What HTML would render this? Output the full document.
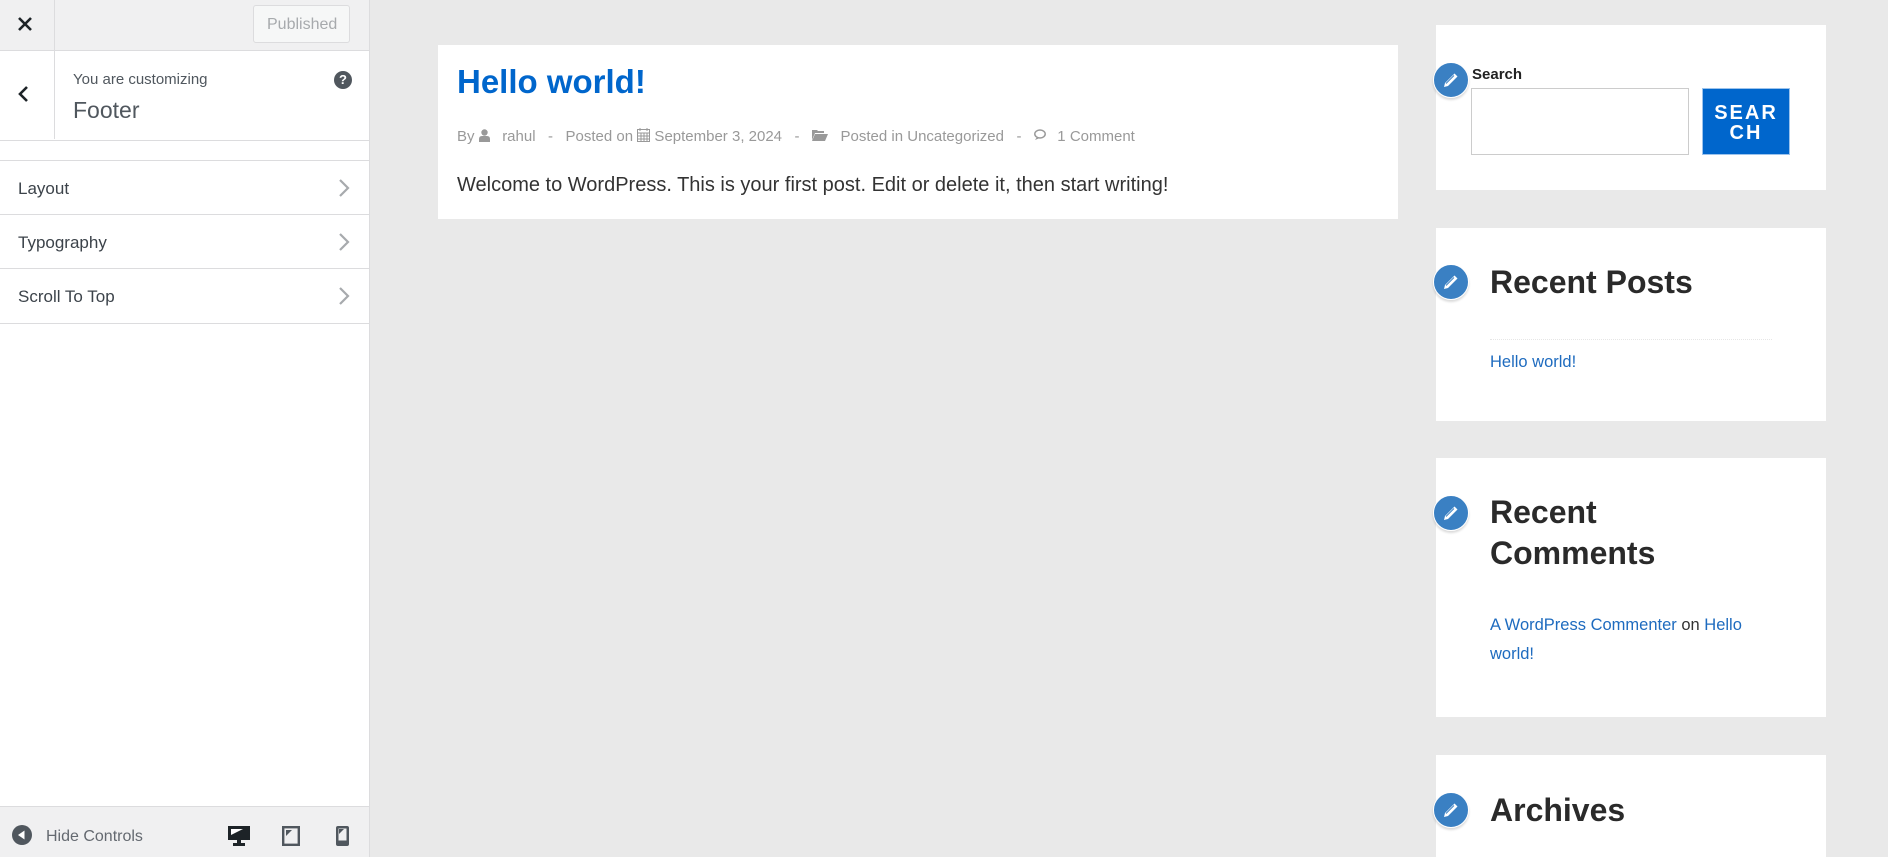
<!DOCTYPE html>
<html><head><meta charset="utf-8"><style>
*{margin:0;padding:0;box-sizing:border-box}
body{width:1888px;height:857px;overflow:hidden;background:#e9e9e9;font-family:"Liberation Sans",Arial,sans-serif;position:relative}
.a{position:absolute}
#side{left:0;top:0;width:370px;height:857px;background:#fff;border-right:1px solid #dcdcde}
.t{position:absolute;white-space:nowrap;line-height:1}
.card{position:absolute;background:#fff}
.pen{position:absolute;width:36px;height:36px;border-radius:50%;background:#3a80c3;box-shadow:0 2px 2px rgba(0,0,0,.15);border:1px solid #fff}
.pen svg{position:absolute;left:0;top:0}
.h{font-weight:bold;color:#2a2a2a;font-size:32px}
.lnk{color:#1e6bbf}
</style></head><body>
<div id="side" class="a">
  <div class="a" style="left:0;top:0;width:369px;height:51px;background:#f0f0f1;border-bottom:1px solid #dcdcde"></div>
  <div class="a" style="left:54px;top:0;width:1px;height:51px;background:#dcdcde"></div>
  <svg class="a" style="left:17px;top:16px" width="16" height="16" viewBox="0 0 16 16"><path d="M2 2L14 14M14 2L2 14" stroke="#1d2327" stroke-width="2.6"/></svg>
  <div class="a" style="left:253px;top:5px;width:97px;height:38px;border:1px solid #dcdcde;border-radius:3px;background:#f6f7f7"></div>
  <div class="t" style="left:267px;top:17px;font-size:16px;color:#a7aaad">Published</div>
  <div class="a" style="left:54px;top:51px;width:1px;height:88px;background:#dcdcde"></div>
  <svg class="a" style="left:17px;top:85px" width="12" height="18" viewBox="0 0 12 18"><path d="M10 2L3 9L10 16" stroke="#1d2327" stroke-width="2.6" fill="none"/></svg>
  <div class="t" style="left:73px;top:72px;font-size:15px;color:#50575e">You are customizing</div>
  <div class="t" style="left:73px;top:99px;font-size:23px;color:#50575e">Footer</div>
  <div class="a" style="left:334px;top:71px;width:18px;height:18px;border-radius:50%;background:#50575e;color:#fff;font-weight:bold;font-size:13px;text-align:center;line-height:18px">?</div>
  <div class="a" style="left:0;top:140px;width:369px;height:1px;background:#dcdcde"></div>
  <div class="a" style="left:0;top:160px;width:369px;height:1px;background:#dcdcde"></div>
  <div class="a" style="left:0;top:214px;width:369px;height:1px;background:#dcdcde"></div>
  <div class="a" style="left:0;top:268px;width:369px;height:1px;background:#dcdcde"></div>
  <div class="a" style="left:0;top:323px;width:369px;height:1px;background:#dcdcde"></div>
  <div class="t" style="left:18px;top:180px;font-size:17px;color:#3c434a">Layout</div>
  <div class="t" style="left:18px;top:234px;font-size:17px;color:#3c434a">Typography</div>
  <div class="t" style="left:18px;top:288px;font-size:17px;color:#3c434a">Scroll To Top</div>
  <svg class="a" style="left:338px;top:178px" width="12" height="20" viewBox="0 0 12 20"><path d="M2 2L10 10L2 18" stroke="#a7aaad" stroke-width="2.2" fill="none"/></svg>
  <svg class="a" style="left:338px;top:232px" width="12" height="20" viewBox="0 0 12 20"><path d="M2 2L10 10L2 18" stroke="#a7aaad" stroke-width="2.2" fill="none"/></svg>
  <svg class="a" style="left:338px;top:286px" width="12" height="20" viewBox="0 0 12 20"><path d="M2 2L10 10L2 18" stroke="#a7aaad" stroke-width="2.2" fill="none"/></svg>
  <div class="a" style="left:0;top:806px;width:369px;height:51px;background:#f0f0f1;border-top:1px solid #dcdcde"></div>
  <svg class="a" style="left:12px;top:825px" width="20" height="20" viewBox="0 0 20 20"><circle cx="10" cy="10" r="10" fill="#50575e"/><path d="M12.5 5.5V14.5L6 10Z" fill="#fff"/></svg>
  <div class="t" style="left:46px;top:829px;font-size:16px;color:#646970">Hide Controls</div>
  <svg class="a" style="left:228px;top:826px" width="22" height="20" viewBox="0 0 22 20"><rect x="0" y="0" width="22" height="14" fill="#1d2327"/><path d="M3 3H15L3 9Z" fill="#fff"/><rect x="9" y="14" width="4" height="3" fill="#1d2327"/><rect x="5" y="17" width="12" height="3" fill="#1d2327"/></svg>
  <svg class="a" style="left:282px;top:826px" width="18" height="20" viewBox="0 0 18 20"><rect x="1.2" y="1.2" width="15.6" height="17.6" fill="none" stroke="#50575e" stroke-width="2.4"/><path d="M4 4H10L4 10Z" fill="#50575e"/></svg>
  <svg class="a" style="left:336px;top:826px" width="13" height="20" viewBox="0 0 13 20"><rect x="0" y="0" width="13" height="20" rx="2" fill="#50575e"/><rect x="2.5" y="2.5" width="8" height="12" fill="#f0f0f1"/><path d="M3 3H8L3 8Z" fill="#50575e"/></svg>
</div>

<div class="card" style="left:438px;top:45px;width:960px;height:174px"></div>
<div class="t" style="left:457px;top:65px;font-size:33px;font-weight:bold;color:#0066cc">Hello world!</div>
<div class="t" style="left:457px;top:128px;font-size:15px;color:#999">By <svg width="11" height="13" viewBox="0 0 11 13" style="vertical-align:-1px"><circle cx="5.5" cy="3.5" r="3.2" fill="#999"/><path d="M0 13V10Q0 7 3 7H8Q11 7 11 10V13Z" fill="#999"/></svg> &nbsp; rahul &nbsp; - &nbsp; Posted on <svg width="13" height="14" viewBox="0 0 13 14" style="vertical-align:-1px"><rect x="0.5" y="1.5" width="12" height="12" fill="none" stroke="#999"/><path d="M0 5H13M3 0V3M10 0V3M4 5V14M7 5V14M10 5V14M0 8H13M0 11H13" stroke="#999"/></svg> September 3, 2024 &nbsp; - &nbsp; <svg width="16" height="12" viewBox="0 0 16 12"><path d="M0 1H5L6 2H12V4H3L0 11Z M3 5H16L13 12H0Z" fill="#999"/></svg> &nbsp; Posted in Uncategorized &nbsp; - &nbsp; <svg width="15" height="12" viewBox="0 0 15 12"><ellipse cx="6" cy="5" rx="5.2" ry="4" fill="none" stroke="#999" stroke-width="1.5"/><path d="M3 8L1 11L6 9" fill="#999"/></svg> &nbsp;1 Comment</div>
<div class="t" style="left:457px;top:175px;font-size:20px;color:#333">Welcome to WordPress. This is your first post. Edit or delete it, then start writing!</div>

<div class="card" style="left:1436px;top:25px;width:390px;height:165px"></div>
<div class="pen" style="left:1433px;top:62px"><svg width="34" height="34" viewBox="0 0 34 34"><path d="M10 24L11 20L20.5 10.5L23.5 13.5L14 23Z" fill="#fff"/><path d="M12 20.5L20 12.5" stroke="#3a80c3" stroke-width="1"/></svg></div>
<div class="t" style="left:1472px;top:67px;font-size:15px;font-weight:bold;color:#222">Search</div>
<div class="a" style="left:1471px;top:88px;width:218px;height:67px;border:1px solid #ccc;background:#fff"></div>
<div class="a" style="left:1702px;top:88px;width:88px;height:67px;background:#0066cc;border:1px solid #9cc3ec;color:#fff;font-weight:bold;font-size:20px;letter-spacing:2px;text-align:center;line-height:20px;padding-top:14px">SEAR<br>CH</div>

<div class="card" style="left:1436px;top:228px;width:390px;height:193px"></div>
<div class="pen" style="left:1433px;top:264px"><svg width="34" height="34" viewBox="0 0 34 34"><path d="M10 24L11 20L20.5 10.5L23.5 13.5L14 23Z" fill="#fff"/><path d="M12 20.5L20 12.5" stroke="#3a80c3" stroke-width="1"/></svg></div>
<div class="t h" style="left:1490px;top:266px">Recent Posts</div>
<div class="a" style="left:1490px;top:339px;width:282px;border-top:1px dotted #e6e6e6"></div>
<div class="t lnk" style="left:1490px;top:354px;font-size:16.5px">Hello world!</div>

<div class="card" style="left:1436px;top:458px;width:390px;height:259px"></div>
<div class="pen" style="left:1433px;top:495px"><svg width="34" height="34" viewBox="0 0 34 34"><path d="M10 24L11 20L20.5 10.5L23.5 13.5L14 23Z" fill="#fff"/><path d="M12 20.5L20 12.5" stroke="#3a80c3" stroke-width="1"/></svg></div>
<div class="t h" style="left:1490px;top:492px;line-height:41px">Recent<br>Comments</div>
<div class="t" style="left:1490px;top:611px;font-size:16.5px;line-height:29px;color:#333"><span class="lnk">A WordPress Commenter</span> on <span class="lnk">Hello</span><br><span class="lnk">world!</span></div>

<div class="card" style="left:1436px;top:755px;width:390px;height:102px"></div>
<div class="pen" style="left:1433px;top:792px"><svg width="34" height="34" viewBox="0 0 34 34"><path d="M10 24L11 20L20.5 10.5L23.5 13.5L14 23Z" fill="#fff"/><path d="M12 20.5L20 12.5" stroke="#3a80c3" stroke-width="1"/></svg></div>
<div class="t h" style="left:1490px;top:794px">Archives</div>
</body></html>
